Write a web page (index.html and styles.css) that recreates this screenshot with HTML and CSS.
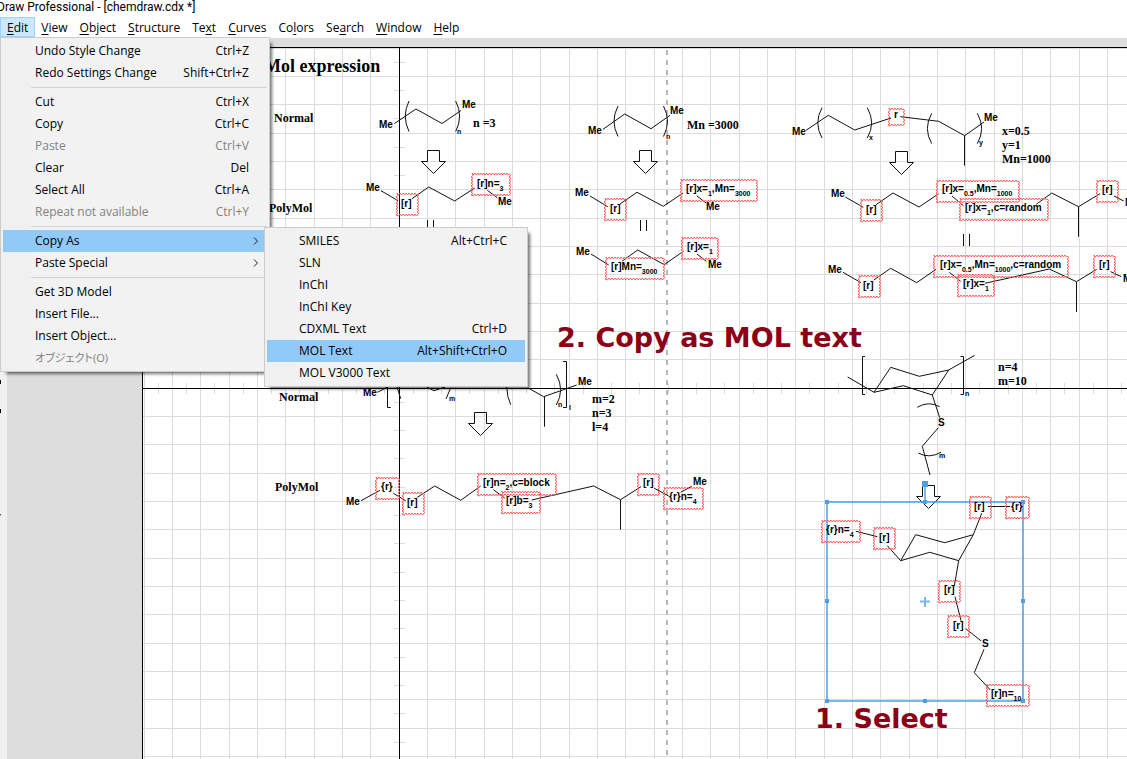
FILE: index.html
```html
<!DOCTYPE html>
<html lang="en">
<head>
<meta charset="utf-8">
<title>Draw Professional - [chemdraw.cdx *]</title>
<link rel="stylesheet" href="styles.css">
</head>
<body>
<header class="titlebar">Draw Professional - [chemdraw.cdx *]</header>
<nav class="menubar">
  <div class="menubar-item">
    <button class="menubar-button open"><u>E</u>dit</button>
    <ul class="menu edit-menu">
      <li><button class="item"><span>Undo Style Change</span><span>Ctrl+Z</span></button></li>
      <li><button class="item"><span>Redo Settings Change</span><span>Shift+Ctrl+Z</span></button></li>
      <li class="separator"></li>
      <li><button class="item"><span>Cut</span><span>Ctrl+X</span></button></li>
      <li><button class="item"><span>Copy</span><span>Ctrl+C</span></button></li>
      <li><button class="item" disabled><span>Paste</span><span>Ctrl+V</span></button></li>
      <li><button class="item"><span>Clear</span><span>Del</span></button></li>
      <li><button class="item"><span>Select All</span><span>Ctrl+A</span></button></li>
      <li><button class="item" disabled><span>Repeat not available</span><span>Ctrl+Y</span></button></li>
      <li class="separator"></li>
      <li class="has-submenu">
        <button class="item active parent"><span>Copy As</span><svg class="chevron" viewBox="0 0 6 8"><path d="M1 .5L4.500 4L1 7.500"/></svg></button>
        <ul class="menu submenu">
          <li><button class="item"><span>SMILES</span><span>Alt+Ctrl+C</span></button></li>
          <li><button class="item"><span>SLN</span></button></li>
          <li><button class="item"><span>InChI</span></button></li>
          <li><button class="item"><span>InChI Key</span></button></li>
          <li><button class="item"><span>CDXML Text</span><span>Ctrl+D</span></button></li>
          <li><button class="item active"><span>MOL Text</span><span>Alt+Shift+Ctrl+O</span></button></li>
          <li><button class="item"><span>MOL V3000 Text</span></button></li>
        </ul>
      </li>
      <li><button class="item parent"><span>Paste Special</span><svg class="chevron" viewBox="0 0 6 8"><path d="M1 .5L4.500 4L1 7.500"/></svg></button></li>
      <li class="separator"></li>
      <li><button class="item"><span>Get 3D Model</span></button></li>
      <li><button class="item"><span>Insert File...</span></button></li>
      <li><button class="item"><span>Insert Object...</span></button></li>
      <li><button class="item" disabled><span class="kana" lang="ja">オブジェクト(O)</span></button></li>
    </ul>
  </div>
  <button class="menubar-button"><u>V</u>iew</button>
  <button class="menubar-button"><u>O</u>bject</button>
  <button class="menubar-button"><u>S</u>tructure</button>
  <button class="menubar-button">Te<u>x</u>t</button>
  <button class="menubar-button"><u>C</u>urves</button>
  <button class="menubar-button">Co<u>l</u>ors</button>
  <button class="menubar-button">Se<u>a</u>rch</button>
  <button class="menubar-button"><u>W</u>indow</button>
  <button class="menubar-button"><u>H</u>elp</button>
</nav>
<main class="workspace">
  <aside class="tool-edge"><svg class="tool-marks" width="7" height="160"><path d="M0 0h1v4h-1zM0 29h1v4h-1z"/><path d="M0 134h1.500l-1.500 2z" fill="#555"/></svg></aside>
  <section class="desk">
    <div class="page">
      <svg class="drawing">
        <defs>
          <pattern id="grid" patternUnits="userSpaceOnUse" x="399" y="388" width="85" height="85">
            <path class="grid-line" d="M.5 0V85M28.500 0V85M56.500 0V85M0 .5H85M0 28.500H85M0 56.500H85"/>
          </pattern>
          <pattern id="ticks-x" patternUnits="userSpaceOnUse" x="399" y="383" width="85" height="11">
            <path class="grid-line" d="M14.500 0V11M42.500 0V11M70.500 0V11"/>
          </pattern>
          <pattern id="ticks-y" patternUnits="userSpaceOnUse" x="394" y="388" width="11" height="85">
            <path class="grid-line" d="M0 14.500H11M0 42.500H11M0 70.500H11"/>
          </pattern>
          <path id="arrow" d="M-6 0H6V11H12L0 23L-12 11H-6Z"/>
        </defs>
        <g transform="translate(-143 -48)">
          <rect x="143" y="48" width="3000" height="2000" fill="url(#grid)"/>
          <rect x="143" y="383" width="3000" height="11" fill="url(#ticks-x)"/>
          <rect x="394" y="48" width="11" height="2000" fill="url(#ticks-y)"/>
          <path class="axis" d="M399.500 48V2048M143 388.500H3143"/>
          <path class="margin-line" d="M667 50V2048"/>

          <g class="bonds">
            <path d="M394.500 123.500L416 109L442 123.500L461 110.500M381 190.700L398 200.700M412 198.700L428.700 187L454.700 201L474.700 188M487.300 190.300L497.300 197.700"/>
            <path d="M409 101Q401.500 116 409 131.500M455.700 101Q463.500 116 455.700 131.500M427.500 220V232M433.500 220V232"/>
            <path d="M603 129.300L624.700 114L651 128.700L670 115.300M590 196L607.700 206.700M620 204L637 192.300L663.300 206.300L683 193M696.700 195.700L706 203"/>
            <path d="M618 106Q610 121 618 136.500M663.500 106Q671.500 121 663.500 136.500M640.500 220V231M646.500 220V231"/>
            <path d="M591 254L608.700 265M622.300 261L637.700 250L664.300 264.700L683.700 251M697 254L706.300 261.300"/>
            <path d="M806 130.300L828.300 115.300L854.700 130L891 118M900.300 116.700L938.700 121.300L964.700 135.700L984 122M964.500 135.700V165.700"/>
            <path d="M822 107.700Q813.500 123 822 138M867.300 107.700Q876 123 867.300 138M931.700 113.300Q923 128.500 931.700 143.700M977.300 113.300Q986 128.500 977.300 143.700"/>
            <path d="M845.300 197L863.300 207.300M876 204.700L893 193L919 207L938.700 193.700M952 196L963.300 205.700M1036.300 204.300L1051.700 193L1078.500 206.700L1100 193.700M1078.500 206.700V236.700M1114 196L1123.700 201M963.500 234V246M969.500 234V246"/>
            <path d="M843 272.300L861 282.700M873.700 280L890.700 268.300L916.700 282.700L936 269.300M949.300 272.300L960.700 281.300M985 283.300L1049.300 269L1076.500 281.700L1096.700 269.300M1076.500 281.700V312M1110.700 271.700L1121.300 276.700"/>
            <path d="M377.300 392.300L387.700 387M390.700 407.500H387.500V362M397 387L400.700 398.700M426.700 387L434 390.700L445 387M450.700 387.700L446 399M506.700 387Q507 397 510.700 404.700M527.700 387.700L543.700 396.700L576.700 385M544.500 396.700V426.700M556.300 374.300Q565 390 556.300 405M563 361.500H566.500V407.500H563"/>
            <path d="M361 500.700L380 490.300M393.300 493.300L405.700 500.700M417.300 497.300L434.700 486L460.700 500.300L480.700 486M493.300 489.700L504.700 498M531.700 500L593.700 486L620.500 499.700L641 486.700M620.500 499.700V529.700M654.300 488.300L668.700 496M680.700 492.300L691.700 486.300"/>
            <path d="M865 356.500H862.500V394.500H865M960.500 356.500H963.500V394.500H960.500"/>
            <path d="M847.700 377L874 392.300L890.700 367.300L919.300 376.300L948.700 370L932.300 395L903.300 385.700L874 392.300M948.700 370L974.700 355.300M932.300 395L939.700 417.700M938.300 427.700L922.300 446.300L930 475M917.300 407.300Q928.500 400.500 939.700 406.700M918.300 453Q929 459 941 452.300"/>
            <path d="M856 531.300L877.300 536.700M887.300 545.700L900.700 560.700L915.700 534.700L944.700 542.700L973.300 534.700L958.700 560.700L929.700 552.300L900.700 560.700M973.300 534.700L981.700 513.300M988 506.500H1010M958.700 560.700L954.300 586M955 596.700L961 620.700M965.700 628.700L981.300 641M984 649.300L974.300 672.700L990.300 690"/>
            <use href="#arrow" x="433.500" y="150.500"/><use href="#arrow" x="645.500" y="150.500"/><use href="#arrow" x="901.500" y="151.500"/><use href="#arrow" x="480.500" y="412.500"/><use href="#arrow" x="928.500" y="485.500"/>
          </g>

          <g class="selection">
            <rect x="827" y="502" width="196" height="199"/>
            <path d="M925 486V502"/>
            <path class="handle" d="M922 481h6v6h-6zM825 500h4v4h-4zM1021 500h4v4h-4zM825 699h4v4h-4zM1021 699h4v4h-4zM923 500h4v4h-4zM923 699h4v4h-4zM825 599h4v4h-4zM1021 599h4v4h-4z"/>
            <path d="M920 601.500H930M925 597V607"/>
          </g>

          <g id="wavy-boxes" class="wavy">
            <rect x="397" y="194" width="21" height="21"/><rect x="472" y="174" width="38" height="21"/>
            <rect x="605" y="199" width="21" height="21"/><rect x="681" y="180" width="76" height="21"/>
            <rect x="606" y="258" width="58" height="21"/><rect x="682" y="238" width="36" height="21"/>
            <rect x="889" y="109" width="15" height="16"/><rect x="861" y="200" width="21" height="21"/>
            <rect x="937" y="181" width="82" height="21"/><rect x="960" y="199" width="88" height="21"/>
            <rect x="1097" y="181" width="21" height="21"/><rect x="859" y="276" width="21" height="21"/>
            <rect x="934" y="256" width="134" height="21"/><rect x="958" y="275" width="36" height="21"/>
            <rect x="1094" y="256" width="21" height="21"/><rect x="376" y="478" width="23" height="21"/>
            <rect x="403" y="493" width="21" height="21"/><rect x="478" y="474" width="78" height="21"/>
            <rect x="502" y="492" width="38" height="21"/><rect x="638" y="474" width="21" height="21"/>
            <rect x="664" y="488" width="39" height="21"/><rect x="822" y="521" width="38" height="21"/>
            <rect x="874" y="528" width="21" height="21"/><rect x="970" y="497" width="21" height="21"/>
            <rect x="1006" y="497" width="23" height="21"/><rect x="939" y="581" width="21" height="21"/>
            <rect x="948" y="616" width="21" height="21"/><rect x="987" y="685" width="42" height="21"/>
          </g>

          <g class="atom">
            <text x="379" y="128">Me</text><text x="462" y="108">Me</text>
            <text x="366" y="191">Me</text><text x="401" y="207">[r]</text>
            <text x="477" y="187">[r]n=<tspan class="sub" dy="4">3</tspan></text><text x="498" y="205">Me</text>
            <text x="588" y="134">Me</text><text x="670" y="114">Me</text>
            <text x="575" y="196">Me</text><text x="610" y="212">[r]</text>
            <text x="686" y="192">[r]x=<tspan class="sub" dy="4">1</tspan><tspan dy="-4">,Mn=</tspan><tspan class="sub" dy="4">3000</tspan></text><text x="706" y="210">Me</text>
            <text x="576" y="255">Me</text><text x="611" y="270">[r]Mn=<tspan class="sub" dy="4">3000</tspan></text>
            <text x="687" y="250">[r]x=<tspan class="sub" dy="4">1</tspan></text><text x="708" y="268">Me</text>
            <text x="792" y="135">Me</text><text x="894" y="118">r</text><text x="984" y="121">Me</text>
            <text x="831" y="197">Me</text><text x="866" y="213">[r]</text>
            <text x="942" y="192">[r]x=<tspan class="sub" dy="4">0.5</tspan><tspan dy="-4">,Mn=</tspan><tspan class="sub" dy="4">1000</tspan></text>
            <text x="965" y="211">[r]x=<tspan class="sub" dy="4">1</tspan><tspan dy="-4">,c=random</tspan></text>
            <text x="1102" y="193">[r]</text><text x="1125" y="206">Me</text>
            <text x="828" y="273">Me</text><text x="863" y="289">[r]</text>
            <text x="940" y="268">[r]x=<tspan class="sub" dy="4">0.5</tspan><tspan dy="-4">,Mn=</tspan><tspan class="sub" dy="4">1000</tspan><tspan dy="-4">,c=random</tspan></text>
            <text x="963" y="287">[r]x=<tspan class="sub" dy="4">1</tspan></text>
            <text x="1099" y="268">[r]</text><text x="1123" y="282">Me</text>
            <text x="363" y="396">Me</text><text x="578" y="385">Me</text>
            <text x="346" y="505">Me</text><text x="381" y="490">{r}</text><text x="407" y="506">[r]</text>
            <text x="483" y="486">[r]n=<tspan class="sub" dy="4">2</tspan><tspan dy="-4">,c=block</tspan></text>
            <text x="506" y="504">[r]b=<tspan class="sub" dy="4">3</tspan></text>
            <text x="643" y="486">[r]</text><text x="669" y="500">{r}n=<tspan class="sub" dy="4">4</tspan></text><text x="693" y="485">Me</text>
            <text x="938" y="426">S</text><text x="982" y="647">S</text>
            <text x="826" y="533">{r}n=<tspan class="sub" dy="4">4</tspan></text><text x="879" y="541">[r]</text>
            <text x="974" y="510">[r]</text><text x="1011" y="510">{r}</text>
            <text x="944" y="593">[r]</text><text x="953" y="629">[r]</text>
            <text x="991" y="697">[r]n=<tspan class="sub" dy="4">10</tspan></text>
          </g>
          <g class="atom repeat">
            <text x="457" y="134">n</text><text x="666" y="139">n</text><text x="869" y="140">x</text><text x="979" y="145">y</text>
            <text x="449" y="401">m</text><text x="558" y="407">n</text><text x="569" y="410">l</text><text x="965" y="396">n</text><text x="939" y="458">m</text>
          </g>
          <g class="caption">
            <text class="heading" x="264" y="72">Mol expression</text>
            <text x="274" y="122">Normal</text><text x="269" y="212">PolyMol</text>
            <text x="279" y="401">Normal</text><text x="275" y="491">PolyMol</text>
            <text x="473" y="127">n =3</text><text x="687" y="129">Mn =3000</text>
            <text x="1002" y="135">x=0.5</text><text x="1002" y="149">y=1</text><text x="1002" y="163">Mn=1000</text>
            <text x="592" y="403">m=2</text><text x="592" y="417">n=3</text><text x="592" y="431">l=4</text>
            <text x="998" y="371">n=4</text><text x="998" y="385">m=10</text>
          </g>
          <g class="note">
            <text x="557" y="347">2. Copy as MOL text</text>
            <text x="815" y="728">1. Select</text>
          </g>
        </g>
      </svg>
    </div>
  </section>
</main>
<script src="wavy.js"></script>
</body>
</html>
```
FILE: styles.css
```css
* { box-sizing: border-box; }
html, body { height: 100%; margin: 0; }
body {
  display: flex;
  flex-direction: column;
  overflow: hidden;
  background: #fff;
  color: #000;
  font: 12px/16px "Open Sans", "Noto Sans", sans-serif;
}
button {
  margin: 0;
  border: 0;
  background: none;
  color: inherit;
  font: inherit;
}
.titlebar { height: 17px; font-family: Roboto, sans-serif; line-height: 14px; text-indent: -3px; white-space: pre; overflow: hidden; }
.menubar { display: flex; height: 21px; }
.menubar-item { position: relative; }
.menubar-button { display: block; height: 20px; padding: 1px 5px 0; border: 1px solid transparent; }
.menubar-button.open { padding: 1px 6px 0; background: #cce8ff; border-color: #99d1ff; }
u { text-underline-offset: 2px; }

.menu {
  position: absolute;
  z-index: 2;
  margin: 0;
  padding: 2px;
  list-style: none;
  border: 1px solid #ccc;
  background: linear-gradient(to right, #f0f0f0 30px, #f2f2f2 30px);
  box-shadow: 4px 4px 3px -2px rgba(0, 0, 0, .55);
}
.edit-menu { top: 20px; left: 0; width: 270px; }
.has-submenu { position: relative; }
.submenu { top: -3px; left: 261px; width: 264px; }
.item {
  display: flex;
  justify-content: space-between;
  align-items: center;
  width: 100%;
  height: 22px;
  padding: 0 18px 0 32px;
  text-align: left;
  white-space: nowrap;
}
.item.parent { padding-right: 8px; }
.item.active { background: #91c9f7; }
.item:disabled { color: #838383; }
.chevron { width: 6px; height: 8px; fill: none; stroke: #222; }
.separator { height: 7px; margin-left: 28px; border-top: 3px solid transparent; border-bottom: 3px solid transparent; background: #d4d4d4; background-clip: content-box; }
.kana { font: 11px/16px "Open Sans", "Noto Sans CJK JP", sans-serif; font-feature-settings: "palt"; }

.workspace { flex: 1; display: flex; min-height: 0; }
.tool-edge { width: 7px; padding-top: 342px; background: #f0f0f0; }
.tool-marks { display: block; }
.desk { flex: 1; display: flex; min-width: 0; padding: 9px 0 0 135px; background: #ddd; }
.page { flex: 1; display: flex; min-width: 0; border: solid #000; border-width: 1px 0 0 1px; background: #fff; }
.drawing { flex: 1; min-width: 0; overflow: hidden; }

.grid-line { stroke: #dcdcdc; }
.axis { stroke: #000; }
.margin-line { stroke: #b8b8b8; stroke-width: 2px; stroke-dasharray: 5 5; }
.bonds { fill: none; stroke: #111; }
.wavy { fill: none; stroke: #ff5c5c; }
.selection { fill: none; stroke: #4299e2; stroke-opacity: .7; stroke-width: 2px; }
.handle { fill: #4da0e4; stroke: none; }
.atom { font: bold 10px "Liberation Sans", Arial, sans-serif; }
.sub, .repeat { font-size: 7px; }
.caption { font: bold 12px "Liberation Serif", "Times New Roman", serif; }
.heading { font-size: 18px; }
.note { font: bold 27px "DejaVu Sans", Verdana, sans-serif; fill: #8b0016; }
```
FILE: wavy.js
```js
// Replaces each plain rectangle with a zigzag outline of the same size.
document.querySelectorAll("#wavy-boxes rect").forEach(function (rect) {
  var x = +rect.getAttribute("x"), y = +rect.getAttribute("y");
  var w = +rect.getAttribute("width"), h = +rect.getAttribute("height");
  var points = [];
  function edge(x0, y0, x1, y1) {
    var length = Math.abs(x1 - x0) + Math.abs(y1 - y0);
    var steps = 2 * Math.round(length / 3);
    for (var i = 0; i < steps; i++) {
      var t = i / steps, off = i % 2 ? 1 : -1;
      points.push([x0 + (x1 - x0) * t + (y1 !== y0 ? off : 0), y0 + (y1 - y0) * t + (x1 !== x0 ? off : 0)]);
    }
  }
  edge(x, y, x + w, y);
  edge(x + w, y, x + w, y + h);
  edge(x + w, y + h, x, y + h);
  edge(x, y + h, x, y);
  var outline = document.createElementNS("http://www.w3.org/2000/svg", "polygon");
  outline.setAttribute("points", points.join(" "));
  rect.replaceWith(outline);
});
```
